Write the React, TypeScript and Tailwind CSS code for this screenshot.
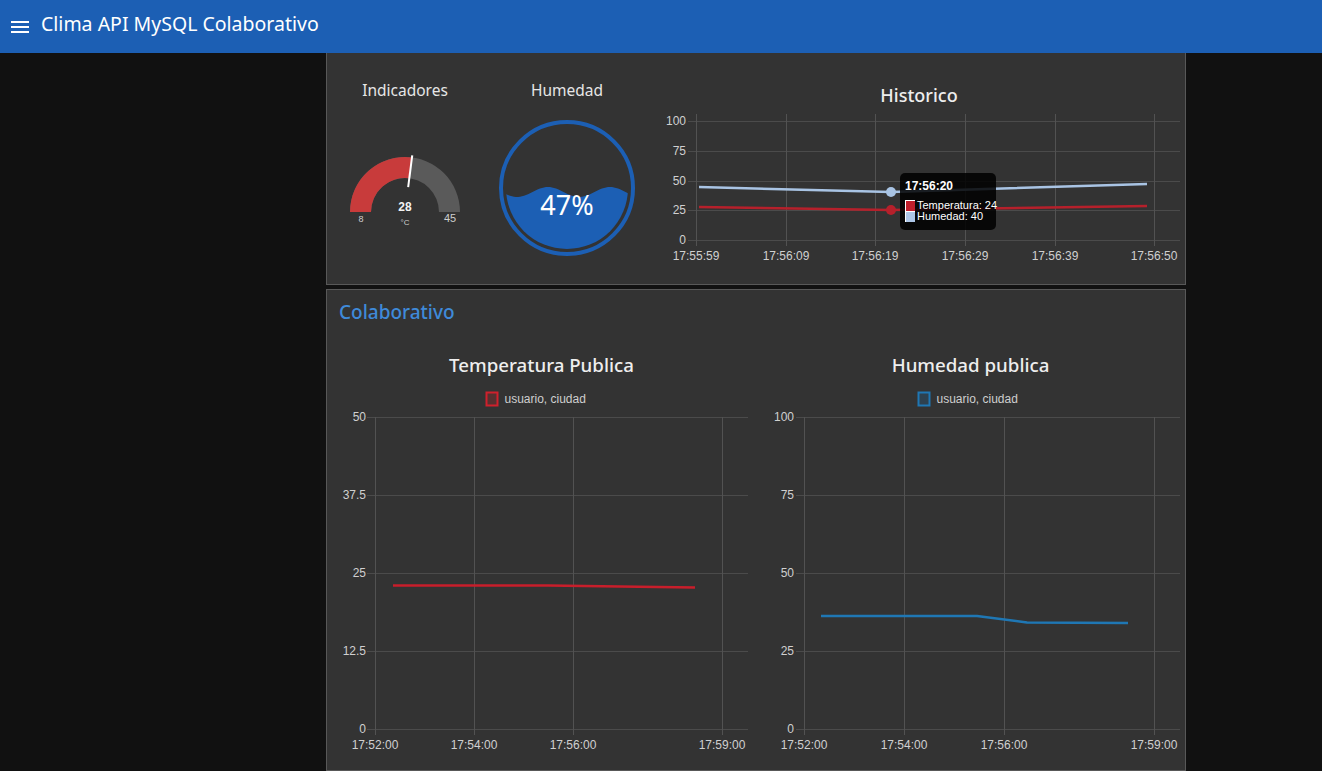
import React from "react";

type Tick = { label: string; pos: number };
type Series = { color: string; width: number; points: [number, number][] };

const uiFont = { fontFamily: '"Noto Sans", "Open Sans", sans-serif' };
const chartFont = '"Liberation Sans", Arial, sans-serif';

function pt(cx: number, cy: number, r: number, deg: number): [number, number] {
  const a = (deg * Math.PI) / 180;
  return [cx - r * Math.cos(a), cy - r * Math.sin(a)];
}

function arcPath(cx: number, cy: number, ro: number, ri: number, a1: number, a2: number) {
  const [x1, y1] = pt(cx, cy, ro, a1);
  const [x2, y2] = pt(cx, cy, ro, a2);
  const [x3, y3] = pt(cx, cy, ri, a2);
  const [x4, y4] = pt(cx, cy, ri, a1);
  return `M${x1} ${y1} A${ro} ${ro} 0 0 1 ${x2} ${y2} L${x3} ${y3} A${ri} ${ri} 0 0 0 ${x4} ${y4} Z`;
}

function Gauge() {
  const cx = 405;
  const cy = 212;
  const angle = (180 * (28 - 8)) / (45 - 8);
  const [nx1, ny1] = pt(cx, cy, 25, angle);
  const [nx2, ny2] = pt(cx, cy, 57, angle);
  return (
    <svg width={156} height={180} viewBox="327 100 156 180">
      <path d={arcPath(cx, cy, 55, 34, 0, 180)} fill="#5a5a5a" />
      <path d={arcPath(cx, cy, 55, 34, 0, angle)} fill="#c83b3b" />
      <line x1={nx1} y1={ny1} x2={nx2} y2={ny2} stroke="#ffffff" strokeWidth={2} />
      <text x={cx} y={211} textAnchor="middle" fontSize={12} fontWeight={700} fill="#f2f2f2" fontFamily={chartFont}>
        28
      </text>
      <text x={cx} y={225} textAnchor="middle" fontSize={8} fill="#cfcfcf" fontFamily={chartFont}>
        °C
      </text>
      <text x={361} y={222} textAnchor="middle" fontSize={9} fill="#cfcfcf" fontFamily={chartFont}>
        8
      </text>
      <text x={450} y={222} textAnchor="middle" fontSize={11} fill="#cfcfcf" fontFamily={chartFont}>
        45
      </text>
    </svg>
  );
}

function LiquidGauge() {
  const cx = 567;
  const cy = 188;
  let wave = "";
  for (let x = 500; x <= 636; x += 2) {
    const y = 192 - 5 * Math.sin((2 * Math.PI * (x - 532.5)) / 62);
    wave += `${x === 500 ? "M" : "L"}${x} ${y.toFixed(2)} `;
  }
  wave += "L636 260 L500 260 Z";
  return (
    <svg width={156} height={180} viewBox="489 100 156 180">
      <defs>
        <clipPath id="liquid-clip">
          <circle cx={cx} cy={cy} r={61} />
        </clipPath>
      </defs>
      <circle cx={cx} cy={cy} r={66} fill="none" stroke="#1c5fb4" strokeWidth={4} />
      <path d={wave} fill="#1c5fb4" clipPath="url(#liquid-clip)" />
      <text x={cx} y={215} textAnchor="middle" fontSize={27} fill="#ffffff" style={uiFont}>
        47%
      </text>
    </svg>
  );
}

function LineChart({
  box,
  plot,
  yTicks,
  xTicks,
  yLabelX,
  xLabelY,
  series,
  legend,
  children,
}: {
  box: [number, number, number, number];
  plot: { left: number; right: number; top: number; bottom: number };
  yTicks: Tick[];
  xTicks: Tick[];
  yLabelX: number;
  xLabelY: number;
  series: Series[];
  legend?: { x: number; y: number; color: string; fill: string };
  children?: React.ReactNode;
}) {
  const [bx, by, bw, bh] = box;
  return (
    <svg width={bw} height={bh} viewBox={`${bx} ${by} ${bw} ${bh}`} fontFamily={chartFont}>
      {legend ? (
        <g>
          <rect x={legend.x} y={legend.y} width={11} height={13} fill={legend.fill} stroke={legend.color} strokeWidth={2} />
          <text x={legend.x + 18} y={legend.y + 10.5} fontSize={12} fill="#cfcfcf">
            usuario, ciudad
          </text>
        </g>
      ) : null}
      {yTicks.map((t) => (
        <g key={`y${t.label}`}>
          <line x1={plot.left - 8} x2={plot.right} y1={t.pos + 0.5} y2={t.pos + 0.5} stroke="#4b4b4b" strokeWidth={1} />
          <text x={yLabelX} y={t.pos + 4} textAnchor="end" fontSize={12} fill="#d0d0d0">
            {t.label}
          </text>
        </g>
      ))}
      {xTicks.map((t) => (
        <g key={`x${t.label}`}>
          <line x1={t.pos + 0.5} x2={t.pos + 0.5} y1={plot.top} y2={plot.bottom + 6} stroke="#525252" strokeWidth={1} />
          <text x={t.pos} y={xLabelY} textAnchor="middle" fontSize={12} fill="#d0d0d0">
            {t.label}
          </text>
        </g>
      ))}
      {series.map((s, i) => (
        <polyline
          key={i}
          points={s.points.map((p) => p.join(",")).join(" ")}
          fill="none"
          stroke={s.color}
          strokeWidth={s.width}
          strokeLinejoin="round"
        />
      ))}
      {children}
    </svg>
  );
}

function Historico() {
  return (
    <LineChart
      box={[651, 106, 534, 178]}
      plot={{ left: 696, right: 1180, top: 114, bottom: 240 }}
      yLabelX={686}
      xLabelY={260}
      yTicks={[
        { label: "100", pos: 121 },
        { label: "75", pos: 151 },
        { label: "50", pos: 181 },
        { label: "25", pos: 210 },
        { label: "0", pos: 240 },
      ]}
      xTicks={[
        { label: "17:55:59", pos: 696 },
        { label: "17:56:09", pos: 786 },
        { label: "17:56:19", pos: 875 },
        { label: "17:56:29", pos: 965 },
        { label: "17:56:39", pos: 1055 },
        { label: "17:56:50", pos: 1154 },
      ]}
      series={[
        { color: "#a9c4e4", width: 2.5, points: [[699, 187], [891, 192], [1147, 184]] },
        { color: "#b6202b", width: 2.5, points: [[699, 207], [891, 210], [1147, 206]] },
      ]}
    >
      <circle cx={891} cy={192} r={5} fill="#a9c4e4" />
      <circle cx={891} cy={210} r={5} fill="#b6202b" />
      <rect x={900} y={173} width={96} height={57} rx={5} fill="rgba(0,0,0,0.85)" />
      <text x={905} y={190} fontSize={12} fontWeight={700} fill="#ffffff">
        17:56:20
      </text>
      <rect x={905} y={200} width={10} height={11} fill="#ffffff" />
      <rect x={906} y={201} width={9} height={10} fill="#c01f2c" />
      <rect x={905} y={211} width={10} height={11} fill="#ffffff" />
      <rect x={906} y={212} width={9} height={10} fill="#aec7e8" />
      <text x={917} y={209} fontSize={11} fill="#ffffff">
        Temperatura: 24
      </text>
      <text x={917} y={220} fontSize={11} fill="#ffffff">
        Humedad: 40
      </text>
    </LineChart>
  );
}

export default function App() {
  return (
    <div className="min-h-[771px] bg-[#111111]" style={uiFont}>
      <header className="flex h-[53px] items-center bg-[#1c5fb4] text-white">
        <svg className="ml-[11px]" width={18} height={14} viewBox="0 0 18 14">
          <rect x={0} y={1} width={18} height={2} fill="#ffffff" />
          <rect x={0} y={6} width={18} height={2} fill="#ffffff" />
          <rect x={0} y={11} width={18} height={2} fill="#ffffff" />
        </svg>
        <h1 className="ml-[12px] -mt-[6px] text-[19.5px] leading-none">Clima API MySQL Colaborativo</h1>
      </header>

      <main className="ml-[326px] w-[860px]">
        <section className="flex h-[232px] border border-t-0 border-[#585858] bg-[#333333]">
          <div className="flex w-[156px] flex-col">
            <div className="mt-[27px] h-[20px] text-center text-[15.5px] leading-[20px] text-[#e6e6e6]">Indicadores</div>
            <Gauge />
          </div>
          <div className="ml-[6px] flex w-[156px] flex-col">
            <div className="mt-[27px] h-[20px] text-center text-[15.5px] leading-[20px] text-[#e6e6e6]">Humedad</div>
            <LiquidGauge />
          </div>
          <div className="ml-[6px] flex w-[534px] flex-col">
            <div className="mt-[31px] h-[22px] pl-[2px] text-center text-[18px] font-medium leading-[22px] text-[#eeeeee]">
              Historico
            </div>
            <Historico />
          </div>
        </section>

        <section className="mt-[4px] h-[482px] border border-[#585858] bg-[#333333]">
          <div className="mt-[11px] h-[22px] pl-[12px] text-[19px] font-medium leading-[22px] text-[#3f8ad9]">
            Colaborativo
          </div>
          <div className="flex">
            <div className="flex w-[429px] flex-col">
              <div className="mt-[31px] h-[22px] text-center text-[18.7px] font-medium leading-[22px] text-[#eeeeee]">
                Temperatura Publica
              </div>
              <LineChart
                box={[327, 376, 429, 393]}
                plot={{ left: 375, right: 748, top: 417, bottom: 729 }}
                yLabelX={366}
                xLabelY={749}
                legend={{ x: 486.5, y: 392.5, color: "#d0202c", fill: "rgba(214,39,40,0.22)" }}
                yTicks={[
                  { label: "50", pos: 417 },
                  { label: "37.5", pos: 495 },
                  { label: "25", pos: 573 },
                  { label: "12.5", pos: 651 },
                  { label: "0", pos: 729 },
                ]}
                xTicks={[
                  { label: "17:52:00", pos: 375 },
                  { label: "17:54:00", pos: 474 },
                  { label: "17:56:00", pos: 573 },
                  { label: "17:59:00", pos: 722 },
                ]}
                series={[
                  {
                    color: "#c81e2b",
                    width: 2.5,
                    points: [[393, 585.5], [474, 585.5], [548, 585.5], [620, 586.5], [695, 587.5]],
                  },
                ]}
              />
            </div>
            <div className="flex w-[429px] flex-col">
              <div className="mt-[31px] h-[22px] text-center text-[18.7px] font-medium leading-[22px] text-[#eeeeee]">
                Humedad publica
              </div>
              <LineChart
                box={[756, 376, 429, 393]}
                plot={{ left: 804, right: 1180, top: 417, bottom: 729 }}
                yLabelX={794}
                xLabelY={749}
                legend={{ x: 918.5, y: 392.5, color: "#1f77b4", fill: "rgba(31,119,180,0.22)" }}
                yTicks={[
                  { label: "100", pos: 417 },
                  { label: "75", pos: 495 },
                  { label: "50", pos: 573 },
                  { label: "25", pos: 651 },
                  { label: "0", pos: 729 },
                ]}
                xTicks={[
                  { label: "17:52:00", pos: 804 },
                  { label: "17:54:00", pos: 904 },
                  { label: "17:56:00", pos: 1004 },
                  { label: "17:59:00", pos: 1154 },
                ]}
                series={[
                  {
                    color: "#1f77b4",
                    width: 2.5,
                    points: [[821, 616], [977, 616], [1027, 622.5], [1128, 623]],
                  },
                ]}
              />
            </div>
          </div>
        </section>
      </main>
    </div>
  );
}
